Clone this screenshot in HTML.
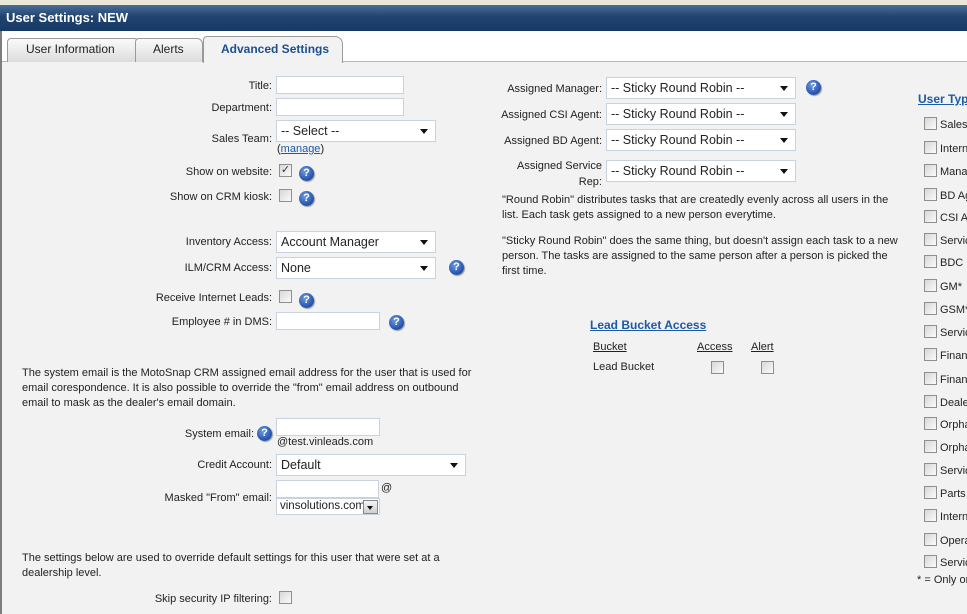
<!DOCTYPE html>
<html><head><meta charset="utf-8"><style>
*{margin:0;padding:0;box-sizing:border-box}
body{width:967px;height:614px;overflow:hidden;background:#fff;font-family:"Liberation Sans",Arial,sans-serif;font-size:11px;color:#222;position:relative}
.a{position:absolute;white-space:nowrap;line-height:13px}
.r{text-align:right;margin-top:2px}
.in{position:absolute;background:#fff;border:1px solid #c9d3e0;height:18px}
.sel{position:absolute;background:#fff;border:1px solid #c9d3e0;height:22px;font-size:12.5px;line-height:20px;padding-left:4px;color:#222}
.sel:after{content:"";position:absolute;right:7px;top:8px;border-left:4px solid transparent;border-right:4px solid transparent;border-top:5px solid #111}
.cb{position:absolute;width:13px;height:13px;border:1px solid #8f8f8f;background:linear-gradient(135deg,#d8d8d8,#fafafa)}
.q{position:absolute;width:15px;height:15px;border-radius:50%;background:radial-gradient(circle at 40% 35%,#6f9be0,#1f4fa8 70%);color:#fff;font-weight:bold;font-size:11px;line-height:15px;text-align:center;box-shadow:1px 1px 1px #999}
.p{position:absolute;line-height:15px}
</style></head><body>
<div style="position:absolute;left:0;top:0;width:967px;height:5px;background:#eae6d8"></div>
<div style="position:absolute;left:0;top:5px;width:967px;height:26px;background:linear-gradient(#4a6d96,#1f4470 45%,#173a64);"></div>
<div class="a" style="left:6px;top:10px;color:#fff;font-weight:bold;font-size:13px;line-height:16px">User Settings: NEW</div>
<div style="position:absolute;left:0;top:31px;width:2px;height:583px;background:#7d7d7d"></div>
<div style="position:absolute;left:2px;top:62px;width:965px;height:552px;background:#f2f2f2"></div>
<div style="position:absolute;left:2px;top:61px;width:965px;height:1px;background:#b8b8b8"></div>
<!-- tabs -->
<div style="position:absolute;left:7px;top:38px;width:133px;height:24px;background:linear-gradient(#fafafa,#dcdcdc);border:1px solid #999;border-bottom:none;border-radius:4px 6px 0 0"></div>
<div class="a" style="left:26px;top:42px;font-size:12px;line-height:14px">User Information</div>
<div style="position:absolute;left:135px;top:38px;width:68px;height:24px;background:linear-gradient(#fafafa,#dcdcdc);border:1px solid #999;border-bottom:none;border-radius:4px 6px 0 0"></div>
<div class="a" style="left:153px;top:42px;font-size:12px;line-height:14px">Alerts</div>
<div style="position:absolute;left:203px;top:36px;width:140px;height:27px;background:#f2f2f2;border:1px solid #999;border-bottom:none;border-radius:4px 8px 0 0"></div>
<div class="a" style="left:221px;top:42px;font-size:12px;line-height:14px;color:#1d4f8f;font-weight:bold">Advanced Settings</div>

<!-- left column -->
<div class="a r" style="right:695px;top:78px">Title:</div><div class="in" style="left:276px;top:76px;width:128px"></div>
<div class="a r" style="right:695px;top:100px">Department:</div><div class="in" style="left:276px;top:98px;width:128px"></div>
<div class="a r" style="right:695px;top:131px">Sales Team:</div><div class="sel" style="left:276px;top:120px;width:160px">-- Select --</div>
<div class="a" style="left:277px;top:143px">(<span style="color:#1d5aa6;text-decoration:underline">manage</span>)</div>
<div class="a r" style="right:695px;top:164px">Show on website:</div><div class="cb" style="left:279px;top:164px;font-size:11px;line-height:11px;color:#335;text-align:center">✓</div><div class="q" style="left:299px;top:166px">?</div>
<div class="a r" style="right:695px;top:189px">Show on CRM kiosk:</div><div class="cb" style="left:279px;top:189px"></div><div class="q" style="left:299px;top:191px">?</div>
<div class="a r" style="right:695px;top:234px">Inventory Access:</div><div class="sel" style="left:276px;top:231px;width:160px">Account Manager</div>
<div class="a r" style="right:695px;top:260px">ILM/CRM Access:</div><div class="sel" style="left:276px;top:257px;width:160px">None</div><div class="q" style="left:449px;top:260px">?</div>
<div class="a r" style="right:695px;top:290px">Receive Internet Leads:</div><div class="cb" style="left:279px;top:290px"></div><div class="q" style="left:299px;top:293px">?</div>
<div class="a r" style="right:695px;top:314px">Employee # in DMS:</div><div class="in" style="left:276px;top:312px;width:104px"></div><div class="q" style="left:389px;top:315px">?</div>
<div class="p" style="left:22px;top:366px;width:450px">The system email is the MotoSnap CRM assigned email address for the user that is used for email corespondence. It is also possible to override the "from" email address on outbound email to mask as the dealer's email domain.</div>
<div class="a r" style="right:713px;top:426px">System email:</div><div class="q" style="left:257px;top:426px">?</div><div class="in" style="left:276px;top:418px;width:104px"></div>
<div class="a" style="left:277px;top:436px">@test.vinleads.com</div>
<div class="a r" style="right:695px;top:457px">Credit Account:</div><div class="sel" style="left:276px;top:454px;width:190px">Default</div>
<div class="a r" style="right:695px;top:490px">Masked "From" email:</div><div class="in" style="left:276px;top:480px;width:103px"></div><div class="a" style="left:381px;top:482px">@</div>
<div style="position:absolute;left:276px;top:498px;width:104px;height:17px;background:#fff;border:1px solid #c9d3e0;font-size:11.5px;line-height:15px;padding-left:3px">vinsolutions.com</div>
<div style="position:absolute;left:363px;top:500px;width:15px;height:14px;background:linear-gradient(#f4f4f4,#cfcfcf);border:1px solid #888"></div>
<div style="position:absolute;left:367px;top:506px;border-left:3.5px solid transparent;border-right:3.5px solid transparent;border-top:4px solid #111"></div>
<div class="p" style="left:22px;top:551px;width:440px">The settings below are used to override default settings for this user that were set at a dealership level.</div>
<div class="a r" style="right:695px;top:591px">Skip security IP filtering:</div><div class="cb" style="left:279px;top:591px"></div>

<!-- middle column -->
<div class="a r" style="right:365px;top:81px">Assigned Manager:</div><div class="sel" style="left:606px;top:77px;width:190px">-- Sticky Round Robin --</div><div class="q" style="left:806px;top:80px">?</div>
<div class="a r" style="right:365px;top:107px">Assigned CSI Agent:</div><div class="sel" style="left:606px;top:103px;width:190px">-- Sticky Round Robin --</div>
<div class="a r" style="right:365px;top:133px">Assigned BD Agent:</div><div class="sel" style="left:606px;top:129px;width:190px">-- Sticky Round Robin --</div>
<div class="a r" style="right:365px;top:156px;line-height:16px">Assigned Service<br>Rep:</div><div class="sel" style="left:606px;top:160px;width:190px">-- Sticky Round Robin --</div>
<div class="p" style="left:502px;top:193px;width:400px">"Round Robin" distributes tasks that are createdly evenly across all users in the list. Each task gets assigned to a new person everytime.</div>
<div class="p" style="left:502px;top:234px;width:400px">"Sticky Round Robin" does the same thing, but doesn't assign each task to a new person. The tasks are assigned to the same person after a person is picked the first time.</div>
<div class="a" style="left:590px;top:318px;font-size:12px;line-height:14px;font-weight:bold;color:#1d5aa6;text-decoration:underline">Lead Bucket Access</div>
<div class="a" style="left:593px;top:341px;text-decoration:underline">Bucket</div>
<div class="a" style="left:697px;top:341px;text-decoration:underline">Access</div>
<div class="a" style="left:751px;top:341px;text-decoration:underline">Alert</div>
<div class="a" style="left:593px;top:361px">Lead Bucket</div>
<div class="cb" style="left:711px;top:361px"></div><div class="cb" style="left:761px;top:361px"></div>

<!-- right column -->
<div class="a" style="left:918px;top:92px;font-size:12px;line-height:14px;font-weight:bold;color:#1d5aa6;text-decoration:underline">User Types</div>
<div class="cb" style="left:924px;top:117px"></div><div class="a" style="left:940px;top:119px">Sales</div>
<div class="cb" style="left:924px;top:141px"></div><div class="a" style="left:940px;top:143px">Internet</div>
<div class="cb" style="left:924px;top:164px"></div><div class="a" style="left:940px;top:166px">Manager</div>
<div class="cb" style="left:924px;top:188px"></div><div class="a" style="left:940px;top:190px">BD Agent</div>
<div class="cb" style="left:924px;top:210px"></div><div class="a" style="left:940px;top:212px">CSI Agent</div>
<div class="cb" style="left:924px;top:233px"></div><div class="a" style="left:940px;top:235px">Service</div>
<div class="cb" style="left:924px;top:255px"></div><div class="a" style="left:940px;top:257px">BDC Director</div>
<div class="cb" style="left:924px;top:279px"></div><div class="a" style="left:940px;top:281px">GM*</div>
<div class="cb" style="left:924px;top:302px"></div><div class="a" style="left:940px;top:304px">GSM*</div>
<div class="cb" style="left:924px;top:325px"></div><div class="a" style="left:940px;top:327px">Service</div>
<div class="cb" style="left:924px;top:348px"></div><div class="a" style="left:940px;top:350px">Finance</div>
<div class="cb" style="left:924px;top:372px"></div><div class="a" style="left:940px;top:374px">Finance</div>
<div class="cb" style="left:924px;top:395px"></div><div class="a" style="left:940px;top:397px">Dealer</div>
<div class="cb" style="left:924px;top:417px"></div><div class="a" style="left:940px;top:419px">Orphan</div>
<div class="cb" style="left:924px;top:440px"></div><div class="a" style="left:940px;top:442px">Orphan</div>
<div class="cb" style="left:924px;top:463px"></div><div class="a" style="left:940px;top:465px">Service</div>
<div class="cb" style="left:924px;top:486px"></div><div class="a" style="left:940px;top:488px">Parts</div>
<div class="cb" style="left:924px;top:509px"></div><div class="a" style="left:940px;top:511px">Internet</div>
<div class="cb" style="left:924px;top:533px"></div><div class="a" style="left:940px;top:535px">Operator</div>
<div class="cb" style="left:924px;top:555px"></div><div class="a" style="left:940px;top:557px">Service</div>
<div class="a" style="left:917px;top:574px">* = Only one</div>
</body></html>
